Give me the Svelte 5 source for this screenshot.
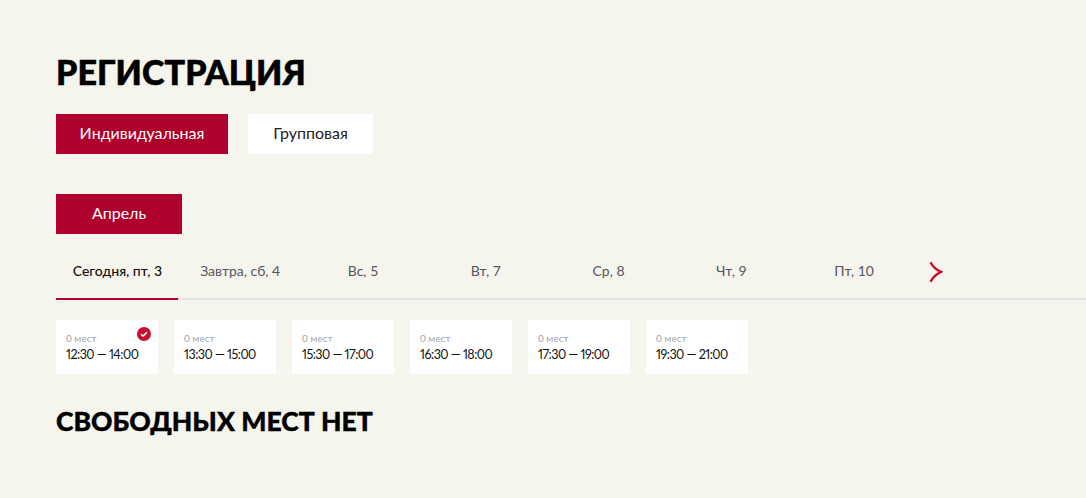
<script>
  const days = ["Сегодня, пт, 3", "Завтра, сб, 4", "Вс, 5", "Вт, 7", "Ср, 8", "Чт, 9", "Пт, 10"];
  const slots = ["12:30 — 14:00", "13:30 — 15:00", "15:30 — 17:00", "16:30 — 18:00", "17:30 — 19:00", "19:30 — 21:00"];
</script>

<main class="page">
  <h1>РЕГИСТРАЦИЯ</h1>

  <div class="types">
    <button class="btn active type-one">Индивидуальная</button>
    <button class="btn type-two">Групповая</button>
  </div>

  <button class="btn active month">Апрель</button>

  <div class="tabs">
    {#each days as day, i}
      <div class="tab" class:current={i === 0}>{day}</div>
    {/each}
    <svg class="arrow" width="14" height="22" viewBox="0 0 14 22" fill="none">
      <path d="M1.5 1.2 Q5 8 12 10.8 Q5 14 1.5 20.8" stroke="#c8102e" stroke-width="2.4" />
    </svg>
  </div>

  <div class="slots">
    {#each slots as slot, i}
      <div class="slot">
        <div class="seats">0 мест</div>
        <div class="time">{slot}</div>
        {#if i === 0}
          <svg class="check" width="14" height="14" viewBox="0 0 14 14">
            <circle cx="7" cy="7" r="7" fill="#c8102e" />
            <path d="M4 7.2 L6.1 9.1 L10 5.2" fill="none" stroke="#fff" stroke-width="1.5" />
          </svg>
        {/if}
      </div>
    {/each}
  </div>

  <h2>СВОБОДНЫХ МЕСТ НЕТ</h2>
</main>

<style>
  :global(body) {
    margin: 0;
    background: #f5f4ed;
  }

  .page {
    height: 498px;
    box-sizing: border-box;
    padding: 52px 0 0 56px;
    overflow: hidden;
    font-family: Lato, "Noto Sans", sans-serif;
    color: #000;
  }

  h1 {
    margin: 0;
    font-size: 34px;
    line-height: 40px;
    font-weight: 900;
    letter-spacing: 0.1px;
    -webkit-text-stroke: 0.6px #000;
  }

  h2 {
    margin: 29px 0 0;
    font-size: 26.5px;
    line-height: 36px;
    font-weight: 900;
    -webkit-text-stroke: 0.4px #000;
  }

  .types {
    display: flex;
    gap: 20px;
    margin-top: 22px;
    margin-bottom: 40px;
  }

  .btn {
    display: block;
    height: 40px;
    padding: 0 0 3px;
    border: 0;
    background: #fff;
    color: #222;
    font-family: inherit;
    font-size: 16px;
  }

  .btn.active {
    background: #af002d;
    color: #fff;
  }

  .type-one { width: 172px; }
  .type-two { width: 125px; }
  .month { width: 126px; }

  .tabs {
    display: flex;
    align-items: center;
    height: 64px;
    border-bottom: 2px solid #e2e2e6;
  }

  .tab {
    position: relative;
    flex: 0 0 122.8px;
    height: 64px;
    box-sizing: border-box;
    padding-top: 27px;
    line-height: 20px;
    text-align: center;
    font-size: 14px;
    color: #55565c;
  }

  .tab.current {
    color: #111;
    font-weight: 500;
  }

  .tab.current::after {
    content: "";
    position: absolute;
    left: 0;
    right: 1px;
    bottom: -2px;
    height: 2px;
    background: #af002d;
  }

  .arrow {
    margin-left: 13px;
    margin-top: 12px;
  }

  .slots {
    display: flex;
    gap: 16px;
    margin-top: 20px;
  }

  .slot {
    position: relative;
    width: 102px;
    height: 54px;
    box-sizing: border-box;
    padding: 11px 0 0 10px;
    background: #fff;
  }

  .seats {
    font-size: 10px;
    line-height: 14px;
    color: #a4a6ad;
  }

  .time {
    margin-top: 2px;
    font-size: 12.5px;
    line-height: 16px;
    letter-spacing: -0.5px;
    font-variant-numeric: proportional-nums;
    color: #111;
  }

  .check {
    position: absolute;
    top: 7px;
    right: 7px;
  }
</style>
